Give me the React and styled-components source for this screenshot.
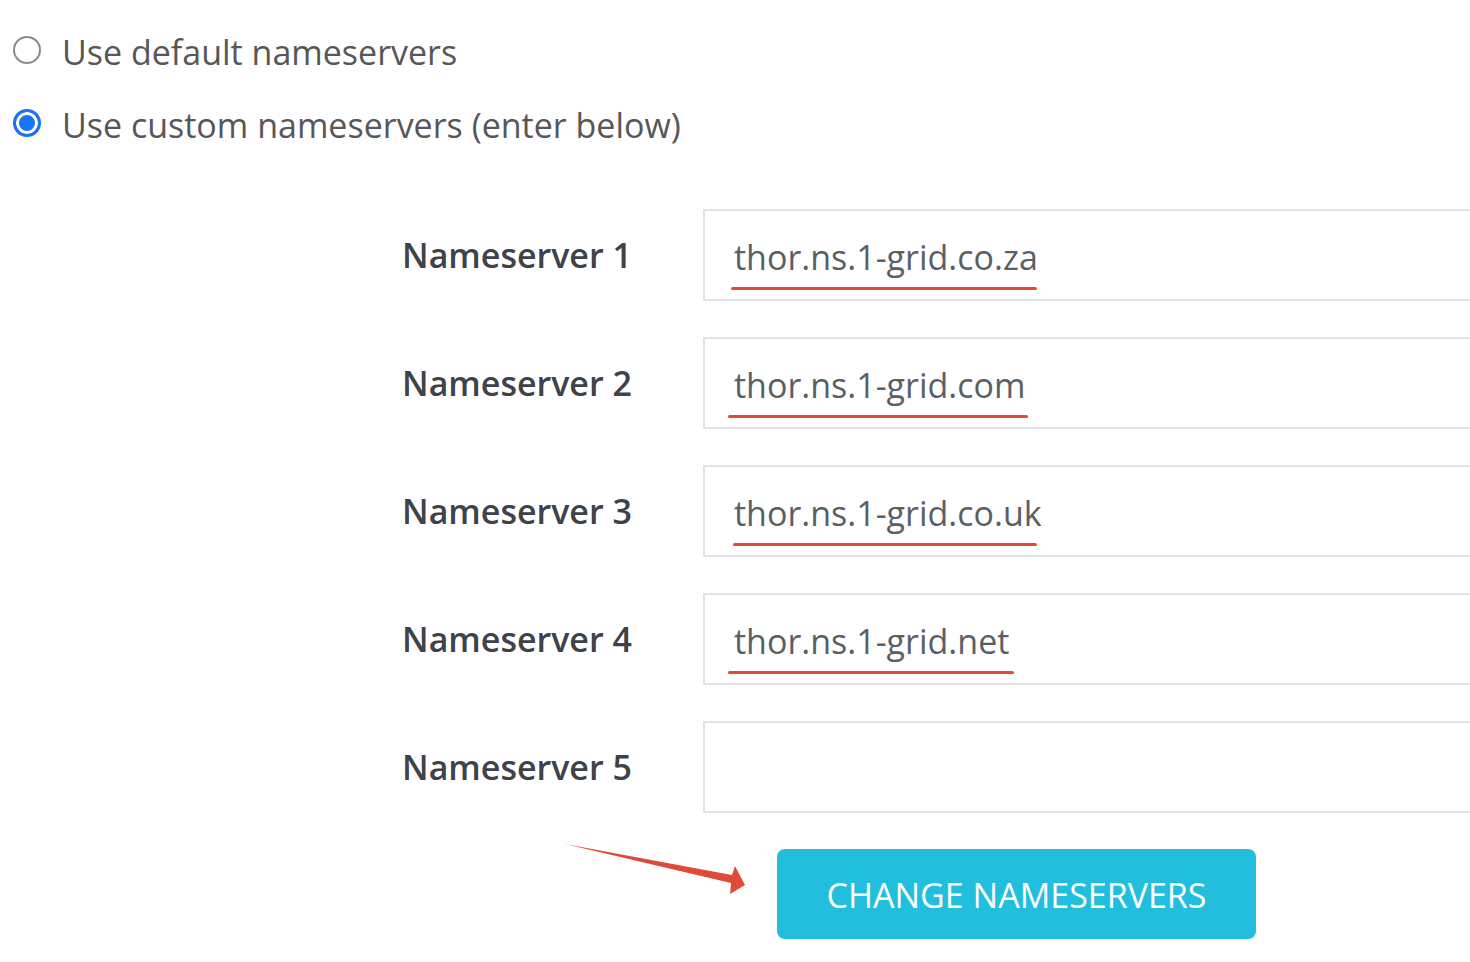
import React from "react";
import styled, { createGlobalStyle } from "styled-components";

const Global = createGlobalStyle`
  html, body { margin: 0; padding: 0; background: #ffffff; }
  body { font-family: "Open Sans", "Liberation Sans", sans-serif; overflow: hidden; }
  #root { width: 1470px; height: 962px; overflow: hidden; }
`;

const Page = styled.div`
  position: relative;
  width: 1470px;
  height: 962px;
  overflow: hidden;
  padding-top: 30px;
  box-sizing: border-box;
`;

const RadioGroup = styled.div`
  display: flex;
  flex-direction: column;
  gap: 29px;
  padding-left: 13px;
`;

const RadioRow = styled.label`
  display: flex;
  align-items: center;
  gap: 21px;
  height: 44px;
  font-size: 34px;
  color: #575757;
`;

const RadioDot = styled.span`
  box-sizing: border-box;
  width: 28px;
  height: 28px;
  border-radius: 50%;
  flex: none;
  border: ${(p) => (p.$checked ? "3px solid #1a73f5" : "2px solid #8a8a8a")};
  background: ${(p) => (p.$checked ? "#1a73f5" : "#fff")};
  box-shadow: ${(p) => (p.$checked ? "inset 0 0 0 3px #fff" : "none")};
  margin-top: -4px;
`;

const Form = styled.div`
  display: flex;
  flex-direction: column;
  gap: 36px;
  margin-top: 62px;
`;

const Row = styled.div`
  display: grid;
  grid-template-columns: 703px 800px;
  align-items: center;
`;

const Label = styled.div`
  padding-left: 402px;
  font-size: 34px;
  font-weight: 600;
  color: #3e4249;
`;

const InputWrap = styled.div`
  position: relative;
`;

const Input = styled.div`
  box-sizing: border-box;
  height: 92px;
  border: 2px solid #dfe3e8;
  padding-left: 29px;
  display: flex;
  align-items: center;
  font-size: 34px;
  color: #5a5f66;
  padding-top: 3px;
`;

const Underline = styled.span`
  position: absolute;
  top: 78px;
  height: 3px;
  border-radius: 2px;
  background: #e14a3b;
`;

const ButtonRow = styled.div`
  position: relative;
  padding-left: 777px;
  margin-top: 36px;
`;

const Button = styled.button`
  box-sizing: border-box;
  width: 479px;
  height: 90px;
  border: none;
  border-radius: 8px;
  background: #22bedd;
  color: #ffffff;
  font-family: "Open Sans", "Liberation Sans", sans-serif;
  font-size: 34px;
  letter-spacing: 0;
  padding: 0;
  padding-top: 2px;
`;

const Arrow = styled.svg`
  position: absolute;
  left: 560px;
  top: -12px;
  overflow: visible;
`;

const servers = [
  { value: "thor.ns.1-grid.co.za", ul: [28, 306] },
  { value: "thor.ns.1-grid.com", ul: [25, 300] },
  { value: "thor.ns.1-grid.co.uk", ul: [30, 304] },
  { value: "thor.ns.1-grid.net", ul: [25, 286] },
  { value: "", ul: null },
];

export default function App() {
  return (
    <Page>
      <Global />
      <RadioGroup>
        <RadioRow>
          <RadioDot />
          Use default nameservers
        </RadioRow>
        <RadioRow>
          <RadioDot $checked />
          Use custom nameservers (enter below)
        </RadioRow>
      </RadioGroup>
      <Form>
        {servers.map((s, i) => (
          <Row key={i}>
            <Label>Nameserver {i + 1}</Label>
            <InputWrap>
              <Input>{s.value}</Input>
              {s.ul && (
                <Underline style={{ left: s.ul[0] + "px", width: s.ul[1] + "px" }} />
              )}
            </InputWrap>
          </Row>
        ))}
      </Form>
      <ButtonRow>
        <Arrow width="200" height="60" viewBox="0 0 200 60">
          <polygon
            points="5,7 172,38 175,29 185,48 170,57 171,46"
            fill="#e04a3a"
          />
        </Arrow>
        <Button>CHANGE NAMESERVERS</Button>
      </ButtonRow>
    </Page>
  );
}
